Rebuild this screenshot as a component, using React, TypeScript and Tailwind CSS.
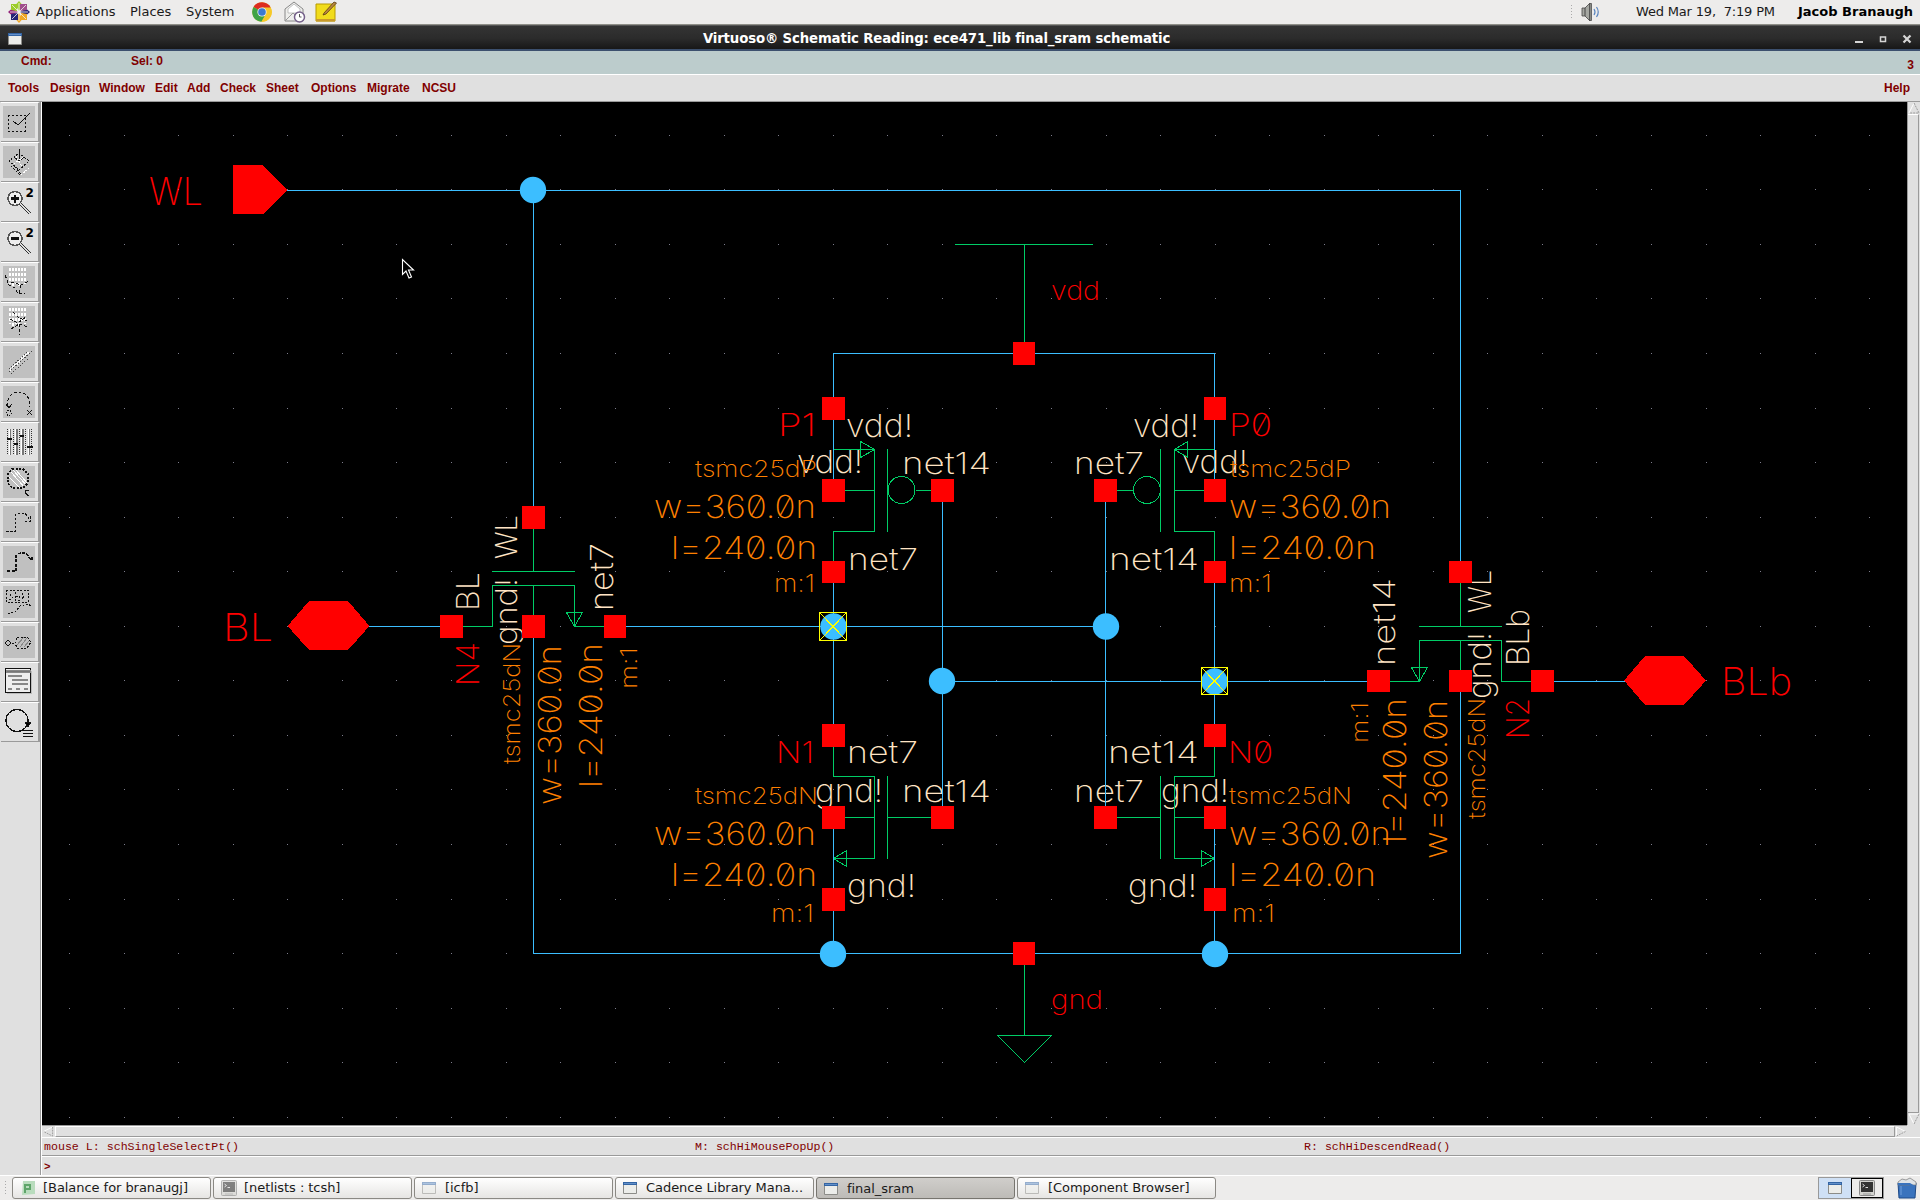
import React from "react";

/* ---------- schematic primitives ---------- */

type Label = [text: string, from: number, to: number, base: number, cap: number, color: string];

const TAN = "#ffe4c4";
const ORG = "#ff8000";
const RED = "#ff0000";
const BLUE = "#3cbeff";
const GREEN = "#00cc66";

const labels: Label[] = [
  ["WL", 151, 201, 205, 28, RED],
  ["BL", 225, 271, 641, 28, RED],
  ["BLb", 1723, 1790, 695, 28, RED],
  ["vdd", 1053, 1098, 300, 19, RED],
  ["gnd", 1053, 1101, 1009, 19, RED],
  ["P1", 780, 814, 436, 23, RED],
  ["vdd!", 848, 911, 437, 23, TAN],
  ["vdd!", 799, 861, 473, 23, TAN],
  ["net14", 904, 989, 474, 22, TAN],
  ["tsmc25dP", 697, 815, 477, 17, ORG],
  ["w=360.0n", 656, 814, 518, 23, ORG],
  ["l=240.0n", 673, 815, 559, 23, ORG],
  ["m:1", 776, 813, 592, 17.5, ORG],
  ["net7", 850, 916, 570, 22, TAN],
  ["vdd!", 1135, 1197, 437, 23, TAN],
  ["P0", 1231, 1270, 436, 23, RED],
  ["net7", 1076, 1142, 474, 22, TAN],
  ["vdd!", 1184, 1246, 473, 23, TAN],
  ["tsmc25dP", 1232, 1349, 477, 17, ORG],
  ["w=360.0n", 1231, 1389, 518, 23, ORG],
  ["l=240.0n", 1231, 1374, 559, 23, ORG],
  ["net14", 1111, 1197, 570, 22, TAN],
  ["m:1", 1231, 1270, 592, 17.5, ORG],
  ["N1", 778, 812, 763, 22, RED],
  ["net7", 849, 916, 763, 22, TAN],
  ["tsmc25dN", 697, 816, 804, 17, ORG],
  ["gnd!", 817, 881, 802, 23, TAN],
  ["net14", 904, 989, 802, 22, TAN],
  ["w=360.0n", 656, 814, 845, 23, ORG],
  ["l=240.0n", 673, 815, 886, 23, ORG],
  ["gnd!", 849, 914, 897, 23, TAN],
  ["m:1", 773, 812, 922, 17.5, ORG],
  ["net14", 1110, 1197, 763, 22, TAN],
  ["N0", 1230, 1271, 763, 22, RED],
  ["net7", 1076, 1142, 802, 22, TAN],
  ["gnd!", 1163, 1227, 802, 23, TAN],
  ["tsmc25dN", 1231, 1350, 804, 17, ORG],
  ["w=360.0n", 1231, 1389, 845, 23, ORG],
  ["l=240.0n", 1231, 1374, 886, 23, ORG],
  ["gnd!", 1130, 1195, 897, 23, TAN],
  ["m:1", 1234, 1273, 922, 17.5, ORG],
];

/* Labels that read upwards: from = lower end, to = upper end, base = x of the baseline. */
const upright: Label[] = [
  ["BL", 609, 574, 479, 23, TAN],
  ["WL", 557, 517, 517, 22, TAN],
  ["gnd!", 643, 580, 517, 22, TAN],
  ["net7", 609, 545, 613, 23, TAN],
  ["N4", 684, 644, 479, 23, RED],
  ["tsmc25dN", 762, 645, 520, 17, ORG],
  ["w=360.0n", 803, 647, 561, 23, ORG],
  ["l=240.0n", 786, 645, 602, 23, ORG],
  ["m:1", 687, 649, 637, 17, ORG],
  ["net14", 664, 580, 1395, 22, TAN],
  ["WL", 611, 572, 1491, 23, TAN],
  ["gnd!", 697, 634, 1491, 23, TAN],
  ["BLb", 664, 611, 1529, 23, TAN],
  ["m:1", 741, 704, 1368, 17, ORG],
  ["l=240.0n", 841, 700, 1406, 23, ORG],
  ["w=360.0n", 857, 702, 1447, 23, ORG],
  ["tsmc25dN", 817, 700, 1485, 17, ORG],
  ["N2", 737, 700, 1529, 23, RED],
];

const wires =
  "M287 190.5H1460.5V561M533.5 190V506M533.5 638V953.5H1460.5V692" +
  "M369 626.5H440M626 626.5H1105.5M833.5 397V353.5H1214.5V397M833.5 420V479M1214.5 420V479" +
  "M833.5 583V724M1214.5 583V724M942.5 502V806M1105.5 502V806M942.5 681.5H1367M1554 681.5H1625" +
  "M833.5 829V888M1214.5 829V888M833.5 911V953M1214.5 911V953";

const devices =
  "M955 244.5H1093M1024.5 244V342M1024.5 965V1035.5M997.5 1035.5H1051.5L1024.5 1062.5Z" +
  /* access transistor, left */
  "M533.5 529V571.5M492 571.5H575M463 626.5H492.5V585.5H574.5V626.5H604M533.5 585V615M566.5 612.5H582.5L574.5 626.5Z" +
  /* access transistor, right */
  "M1460.5 583V626.5M1419 626.5H1502M1390 681.5H1419.5V640.5H1501.5V681.5H1531M1460.5 640V670M1411.5 667.5H1427.5L1419.5 681.5Z" +
  /* left PMOS */
  "M833.5 449.5H874.5V531.5H833.5V561M845 490.5H874M887.5 449V532M916 490.5H931M860.5 441.5V457.5L874.5 449.5Z" +
  /* right PMOS */
  "M1214.5 449.5H1174.5V531.5H1214.5V561M1174 490.5H1204M1160.5 449V532M1117 490.5H1133M1187.5 441.5V457.5L1174.5 449.5Z" +
  /* left NMOS */
  "M833.5 747V776.5H874.5V858.5H833.5M845 817.5H874M887.5 776V859M887 817.5H931M846.5 850.5V866.5L833.5 858.5Z" +
  /* right NMOS */
  "M1214.5 747V776.5H1174.5V858.5H1214.5M1174 817.5H1204M1160.5 776V859M1117 817.5H1160M1201.5 850.5V866.5L1214.5 858.5Z";

const pins: [x: number, y: number, w: number, h: number][] = [
  [522, 506, 23, 23], [440, 615, 23, 23], [522, 615, 23, 23], [604, 615, 22, 23],
  [822, 397, 23, 23], [822, 479, 23, 23], [822, 561, 23, 22], [931, 479, 23, 23],
  [1204, 397, 22, 23], [1204, 479, 22, 23], [1204, 561, 22, 22], [1094, 479, 23, 23],
  [822, 724, 23, 23], [822, 806, 23, 23], [822, 888, 23, 23], [931, 806, 23, 23],
  [1204, 724, 22, 23], [1204, 806, 22, 23], [1204, 888, 22, 23], [1094, 806, 23, 23],
  [1013, 342, 22, 23], [1013, 942, 22, 23], [1449, 561, 23, 22],
  [1367, 670, 23, 22], [1449, 670, 23, 22], [1531, 670, 23, 22],
];

const joints: [number, number][] = [
  [533, 190], [833.5, 626.5], [1106, 626.5], [942, 681], [1214.5, 681.5], [833, 954], [1215, 954],
];

function SchText({ l, up }: { l: Label; up?: boolean }) {
  const [text, from, to, base, cap, color] = l;
  const len = Math.abs(to - from) + 4;
  const place = up
    ? `translate(${base} ${from + 2}) rotate(-90)`
    : `translate(${from - 2} ${base})`;
  return (
    <text
      transform={place}
      fontSize={cap / 0.727}
      fill={color}
      className={cap > 25 ? "font-[150]" : "font-extralight"}
      textLength={len}
      lengthAdjust="spacingAndGlyphs"
    >
      {text}
    </text>
  );
}

function Schematic() {
  const dots: React.ReactNode[] = [];
  for (let i = 0; i < 34; i++)
    for (let j = 0; j < 19; j++)
      dots.push(
        <rect key={i + "-" + j} x={Math.floor(69.6 + i * 54.55)} y={Math.floor(135.3 + j * 54.55)} width="1" height="1" />
      );
  return (
    <svg className="block h-[1023px] w-[1865px] bg-black" viewBox="42 102 1865 1023">
      <g fill="#7d7d8c" shapeRendering="crispEdges">{dots}</g>
      <g
        className="font-[Inter,sans-serif]"
        style={{ fontFeatureSettings: '"zero"' }}
      >
        {labels.map((l, i) => <SchText key={i} l={l} />)}
        {upright.map((l, i) => <SchText key={i} l={l} up />)}
      </g>
      <g fill="none" shapeRendering="crispEdges">
        <path d={devices} stroke={GREEN} />
        <circle cx="901.5" cy="490" r="13.5" stroke={GREEN} />
        <circle cx="1147" cy="490" r="13.5" stroke={GREEN} />
        <path d={wires} stroke={BLUE} />
      </g>
      <g fill={BLUE}>
        {joints.map(([x, y], i) => <circle key={i} cx={x} cy={y} r="13.2" />)}
      </g>
      <g fill={RED} shapeRendering="crispEdges">
        {pins.map(([x, y, w, h], i) => <rect key={i} x={x} y={y} width={w} height={h} />)}
        <path d="M233 165H263L287 190L263 214H233ZM287.500 626L309 601H348L369.500 626L348 650H309ZM1624 680.500L1645 656H1684L1706 680.500L1684 705H1645Z" />
      </g>
      <g fill="none" stroke="#ffff00" shapeRendering="crispEdges">
        <path d="M819.500 612.500h27v28h-27zl27 28m0-28l-27 28M1201.500 667.500h26v27h-26zl26 27m0-27l-26 27" />
      </g>
      <path
        d="M402.500 259.500v15l3.500-3.500 3 7 2.500-1-3-7h5z"
        fill="#000"
        stroke="#fff"
        strokeWidth="1.100"
      />
    </svg>
  );
}

/* ---------- toolbar ---------- */

function Magnifier({ sign }: { sign: string }) {
  return (
    <g transform="translate(0 -1.500)">
      <circle cx="12" cy="14" r="7" fill="#eee" stroke="#555" strokeWidth="1.500" />
      <path d={sign} strokeWidth="2.400" />
      <path d="M17 19l10 10" stroke="#333" strokeWidth="3" />
      <path d="M17 19l10 10" stroke="#ddd" />
      <text x="22.500" y="12.500" className="font-[DejaVu_Sans,sans-serif] text-[12px] font-bold" fill="#000" stroke="none">2</text>
    </g>
  );
}

const toolIcons: { live?: boolean; art: React.ReactNode }[] = [
  { art: <><path d="M5 9h17v16H5z" strokeDasharray="2 2" /><path d="M10 15l5 4 12-12" /></> },
  { art: <><path d="M16 3v12l-5-4m5 4l5-4" /><path d="M16 7l10 8-10 9-10-9zM8 20l9 9M12 21l6 7" strokeDasharray="2 1.500" /><path d="M18 29l8-7M13 10l6 11M11 18l9-7" stroke="#fff" strokeDasharray="2 1" /></> },
  { live: true, art: <Magnifier sign="M8 14h8M12 10v8" /> },
  { live: true, art: <Magnifier sign="M8 14h8" /> },
  { art: <><path d="M7 2v16M10 2v18M13 2v16M16 2v18M19 2v14M22 2v16" stroke="#fff" strokeDasharray="3 2" strokeWidth="1.500" /><path d="M2 9l4 10 6 3 3 6 7-1M8 16l10 3 8-4M18 19l-2 8" strokeDasharray="3 2" /></> },
  { art: <><path d="M7 2v16M10 2v18M13 2v16M16 2v18M19 2v14M22 2v16" stroke="#fff" strokeDasharray="3 2" strokeWidth="1.500" /><path d="M10 6l6 6 8 3M7 13l8 4 8-6M8 23l8-5 9 3M16 18l1 11" strokeDasharray="3 2" /></> },
  { art: <><path d="M7 24L26 6" stroke="#fff" strokeDasharray="2 1" strokeWidth="2.500" /><path d="M6 26L29 5M6 23L24 6M8 28L26 12" stroke="#444" strokeDasharray="1 2" /></> },
  { art: <><path d="M5 20C3 12 9 6 16 6s12 7 10 15" strokeDasharray="3 2" /><path d="M3 18l3 4 3-4M24 24l5 5m0-5l-5 5" /><circle cx="6" cy="27" r="2.500" strokeDasharray="1 1.500" /></> },
  { live: true, art: <><path d="M4 3v26M10 3v26M16 3v26M22 3v26M28 3v26" stroke="#333" strokeDasharray="1 1" /><path d="M7 3v26M14 3v26M20 3v26M26 3v26" stroke="#777" strokeWidth="2" /><path d="M6 3v26M12 3v26M18 3v26M25 3v26" stroke="#fff" /><path d="M4 13h5M11 18h4M17 10h4M24 21h6" strokeWidth="2" /></> },
  { art: <><path d="M8 6l14 16M13 4l11 13M6 11l12 12M10 4l14 16" stroke="#fff" /><path d="M9 3h11l5 5v9l-5 5H9l-4-5V8z" strokeDasharray="2 1.500" strokeWidth="1.500" /><path d="M26 24l-4 1v2l4 3" /></> },
  { art: <path d="M3 25h9V9l4-2h6l5 7m0-4v5h-5" strokeDasharray="2.500 1.500" /> },
  { art: <><path d="M4 25h9V9l4-2h6l5 7m1-3v5" strokeDasharray="3 1.500" strokeWidth="1.300" /></> },
  { art: <><path d="M3 4h22v12H3zM7 8l3 4-4 2M12 6v8h4v-4h-4M19 7v6l3-4" strokeDasharray="2 1.500" /><path d="M5 28l8-3 4-5 8-2 4 3" strokeDasharray="2 1.500" /></> },
  { art: <><path d="M5 14l3 3-3 3-3-3z" /><path d="M9 17h3M14 11h10l4 5-4 6H14l-2-5z" strokeDasharray="2 1.500" /><path d="M14 19l7-8M17 21l7-9M21 21l5-6" stroke="#888" /></> },
  { live: true, art: <g transform="translate(0 -2)"><path d="M4 7h25v23H4z" fill="#bbb" stroke="none" /><path d="M2.500 4.500h25v24h-25z" fill="#eee" strokeWidth="1.500" /><path d="M3 6h24v2H3z" fill="#777" stroke="#888" /><path d="M5 12h14M9 16h16M9 20h16M5 25h4M13 25h4M21 25h4" stroke="#888" strokeWidth="2" /></g> },
  { live: true, art: <><circle cx="14" cy="14.500" r="11" strokeWidth="1.300" /><path d="M22 16h6l-3 5z" fill="#000" /><path d="M20 24.500h10M20 27.500h10M20 30.500h10" stroke="#111" strokeWidth="1.500" /></> },
];

function ToolButton({ live, art }: { live?: boolean; art: React.ReactNode }) {
  return (
    <div className="h-10 w-[39px] border-r-2 border-b border-t border-r-[#9a9a9a] border-b-[#9a9a9a] border-t-white pt-[3px] pl-[2px]">
      <svg
        viewBox="0 0 32 32"
        className={live ? "block h-8 w-8" : "block h-8 w-8 bg-[#c0c0c0]"}
        fill="none"
        stroke="#111"
        shapeRendering="crispEdges"
      >
        {art}
      </svg>
    </div>
  );
}

/* ---------- small icons ---------- */

function WindowIcon({ className }: { className?: string }) {
  return (
    <svg viewBox="0 0 14 12" className={"h-3 w-3.5 shrink-0 " + (className ?? "")}>
      <path d="M.5.5h13v11H.5z" fill="#ecedea" stroke="#8c8c88" />
      <path d="M0 0h14v3H0z" fill="#3465a4" />
      <path d="M1 1h12v.8H1z" fill="#6f9bd3" />
    </svg>
  );
}

function TermIcon({ className }: { className?: string }) {
  return (
    <svg viewBox="0 0 16 16" className={"h-4 w-4 shrink-0 " + (className ?? "")}>
      <rect x=".5" y=".5" width="15" height="15" rx="1" fill="#d3d3cf" stroke="#888" />
      <path d="M2 2h12v10H2z" fill="#333" />
      <path d="M3.500 4l2 1.500-2 1.500M6.500 7.500h2.500" stroke="#ddd" fill="none" />
      <path d="M4 14h8" stroke="#999" />
    </svg>
  );
}

function CentosIcon() {
  return (
    <svg viewBox="0 0 22 22" className="h-[22px] w-[22px]">
      <path d="M11 0l3.500 4L11 10 7.500 4z" fill="#9ccd2a" />
      <path d="M22 11l-4 3.500L12 11l6-3.500z" fill="#262577" />
      <path d="M11 22l-3.500-4L11 12l3.500 6z" fill="#efa724" />
      <path d="M0 11l4-3.500L10 11l-6 3.500z" fill="#932279" />
      <path d="M3 3h6v7L3 9z" fill="#9ccd2a" />
      <path d="M19 3v6l-7 1V3z" fill="#a14f8c" />
      <path d="M19 19h-6v-7l6 1z" fill="#efa724" />
      <path d="M3 19v-6l7-1v7z" fill="#262577" />
      <path d="M4 4l14 14M18 4L4 18M11 2v18M2 11h18" stroke="#f3f1ef" strokeWidth=".8" />
    </svg>
  );
}

function ChromeIcon() {
  return (
    <svg viewBox="0 0 20 20" className="h-5 w-5">
      <circle cx="10" cy="10" r="9.800" fill="#f6c928" />
      <path d="M10 10L1.500 5A9.800 9.800 0 0 1 18.700 5.500z" fill="#dd2c20" />
      <path d="M1.500 5A9.800 9.800 0 0 0 9.500 19.800L14 12 10 10z" fill="#3fa345" />
      <path d="M10 5.500h8.700A9.800 9.800 0 0 1 9.500 19.800L14 12z" fill="#f6c928" />
      <circle cx="10" cy="10" r="4.600" fill="#f4f4f4" />
      <circle cx="10" cy="10" r="3.800" fill="#3c7ad0" />
    </svg>
  );
}

function MailIcon() {
  return (
    <svg viewBox="0 0 22 22" className="h-[22px] w-[22px]">
      <path d="M1 8l9-7 9 7v12H1z" fill="#eeeeec" stroke="#888" />
      <path d="M4 8l6-5 6 5v4H4z" fill="#fff" stroke="#aaa" strokeWidth=".7" />
      <path d="M1 20l8-8 9 8" fill="none" stroke="#999" />
      <circle cx="15.500" cy="16" r="5" fill="#fff" stroke="#75608a" strokeWidth="1.500" />
      <path d="M15.500 13v3h2" fill="none" stroke="#555" />
    </svg>
  );
}

function NoteIcon() {
  return (
    <svg viewBox="0 0 22 22" className="h-[22px] w-[22px]">
      <path d="M1 3h19v17H1z" fill="#f1dc1c" stroke="#b79a00" />
      <path d="M1 18h19v2.500H1z" fill="#c99a2a" />
      <path d="M9 12L19 1l2.500 1L11 13l-3 1z" fill="#b98742" stroke="#5c3c12" strokeWidth=".8" />
    </svg>
  );
}

function SpeakerIcon() {
  return (
    <svg viewBox="0 0 20 20" className="h-5 w-5">
      <path d="M1 6h3l5-5v18l-5-5H1z" fill="#a5a7a2" stroke="#444" strokeWidth=".8" />
      <path d="M8.500 1.500h2v17h-2z" fill="#888a85" stroke="#444" strokeWidth=".7" />
      <path d="M4 6v8" stroke="#444" />
      <path d="M13 7q2 3 0 6M15.500 5q3.500 5 0 10" fill="none" stroke="#5a86c0" strokeWidth="1.200" />
    </svg>
  );
}

function TrashIcon() {
  return (
    <svg viewBox="0 0 20 22" className="h-[22px] w-5">
      <path d="M1 6h18l-1 15H2z" fill="#3a73bd" stroke="#1f4a87" />
      <path d="M1 5l4-3 4 1 4-2 6 4v3H1z" fill="#dfe3e6" stroke="#777" strokeWidth=".7" />
      <path d="M1 6h12l5 3v3l-6-4H1z" fill="#3a73bd" />
      <path d="M4 9v9" stroke="#6f9fdc" />
    </svg>
  );
}

function Grip() {
  return (
    <div className="h-4 w-1 bg-[radial-gradient(circle,#aaa_0.7px,transparent_0.8px)] bg-[length:3px_3px]" />
  );
}

/* ---------- window chrome ---------- */

const menus: [string, string][] = [
  ["Tools", "w-[42px]"],
  ["Design", "w-[49px]"],
  ["Window", "w-[56px]"],
  ["Edit", "w-[32px]"],
  ["Add", "w-[33px]"],
  ["Check", "w-[46px]"],
  ["Sheet", "w-[45px]"],
  ["Options", "w-[56px]"],
  ["Migrate", "w-[55px]"],
  ["NCSU", "w-[40px]"],
];

function GnomePanel() {
  return (
    <div className="flex h-[25px] items-center border-b border-[#8f8f88] bg-[#edeceb] pl-2 text-[13px] text-[#1a1a1a]">
      <CentosIcon />
      <span className="ml-[6px] w-[94px]">Applications</span>
      <span className="w-14">Places</span>
      <span className="w-[66px]">System</span>
      <ChromeIcon />
      <span className="ml-3"><MailIcon /></span>
      <span className="ml-[9px]"><NoteIcon /></span>
      <span className="ml-auto"><Grip /></span>
      <span className="ml-[7px]"><SpeakerIcon /></span>
      <span className="ml-[35px] w-[162px] tracking-[-0.18px] whitespace-pre">Wed Mar 19,  7:19 PM</span>
      <span className="w-[122px] font-bold text-black">Jacob Branaugh</span>
    </div>
  );
}

function TitleBar() {
  return (
    <div className="flex h-[26px] items-center border-t border-[#555] bg-linear-to-b from-[#343434] via-[#2b2b2b] to-[#141414] pr-2 pl-2 shadow-[inset_0_-2px_0_#3c506e]">
      <WindowIcon />
      <div className="grow pr-[3px] text-center text-[13.3px] font-bold tracking-[-0.145px] text-white">
        Virtuoso® Schematic Reading: ece471_lib final_sram schematic
      </div>
      <svg viewBox="0 0 58 12" className="h-3 w-[58px] shrink-0" fill="none" stroke="#d5d5d5">
        <path d="M1 9h8" strokeWidth="2" />
        <path d="M26.500 4h5v4.500h-5z" strokeWidth="1.500" />
        <path d="M49.500 2.500l7 7m0-7l-7 7" strokeWidth="2.200" />
      </svg>
    </div>
  );
}

function Window() {
  return (
    <div className="flex grow flex-col bg-[#e0e0e0] font-['Liberation_Sans',Arial,sans-serif] text-[12px] font-bold text-[#800000]">
      <div className="flex h-[23px] items-start bg-[#bccccc] pt-[1px] pl-[21px]">
        <span className="w-[110px]">Cmd:</span>
        <span>Sel: 0</span>
        <span className="ml-auto pt-1 pr-[6px]">3</span>
      </div>
      <div className="flex h-7 items-center border-t border-b border-t-white border-b-[#9a9a9a] pl-2">
        {menus.map(([name, w]) => (
          <span key={name} className={w}>{name}</span>
        ))}
        <span className="ml-auto pr-[10px]">Help</span>
      </div>
      <div className="flex h-[1073px]">
        <div className="w-[42px] shrink-0 border-r border-white pl-px shadow-[inset_-1px_0_0_#9a9a9a]">
          {toolIcons.map((t, i) => (
            <ToolButton key={i} {...t} />
          ))}
        </div>
        <div className="flex grow flex-col">
          <div className="flex">
            <Schematic />
            <div className="flex w-[13px] flex-col border-l border-[#9a9a9a]">
              <svg viewBox="0 0 12 12" className="h-3 w-3" fill="none" stroke="#9a9a9a">
                <path d="M6 1L1 11" stroke="#fff" />
                <path d="M6 1l5 10H1" strokeDasharray="2 1" />
              </svg>
              <div className="w-[11px] grow border-t border-r border-b border-t-white border-r-[#9a9a9a] border-b-[#9a9a9a]" />
              <svg viewBox="0 0 12 12" className="h-3 w-3" fill="none" stroke="#9a9a9a">
                <path d="M6 11L1 1h10" stroke="#fff" />
                <path d="M6 11l5-10" strokeDasharray="2 1" />
              </svg>
            </div>
          </div>
          <div className="mr-[13px] flex h-3 border-t border-[#9a9a9a]">
            <svg viewBox="0 0 12 12" className="h-[11px] w-3" fill="none" stroke="#9a9a9a">
              <path d="M1 6l10-5" stroke="#fff" />
              <path d="M11 1v10L1 6" strokeDasharray="2 1" />
            </svg>
            <div className="ml-px grow border border-t-white border-r-[#9a9a9a] border-b-[#9a9a9a] border-l-white" />
            <svg viewBox="0 0 12 12" className="h-[11px] w-3" fill="none" stroke="#9a9a9a">
              <path d="M11 6L1 1v10" stroke="#fff" />
              <path d="M11 6L1 11" strokeDasharray="2 1" />
            </svg>
          </div>
          <div className="flex h-[19px] items-center border-t border-b border-t-white border-b-[#9a9a9a] pt-px pl-[2px] font-['Liberation_Mono',monospace] text-[11.62px] font-normal">
            <span className="w-[651px]">mouse L: schSingleSelectPt()</span>
            <span className="w-[609px]">M: schHiMousePopUp()</span>
            <span>R: schHiDescendRead()</span>
          </div>
          <div className="flex h-[19px] items-center border-t border-white pt-[2px] pl-[2px] font-['Liberation_Mono',monospace] text-[11px]">
            &gt;
          </div>
        </div>
      </div>
    </div>
  );
}

const tasks: { name: string; icon: React.ReactNode; active?: boolean }[] = [
  {
    name: "[Balance for branaugj]",
    icon: (
      <svg viewBox="0 0 16 16" className="h-4 w-4 shrink-0">
        <path d="M3 1h12v13l-13 1z" fill="#b9dcbd" />
        <path d="M5 13V5h5v4H5" fill="none" stroke="#5fa56a" strokeWidth="2" />
      </svg>
    ),
  },
  { name: "[netlists : tcsh]", icon: <TermIcon className="opacity-60" /> },
  { name: "[icfb]", icon: <WindowIcon className="opacity-50" /> },
  { name: "Cadence Library Mana...", icon: <WindowIcon /> },
  { name: "final_sram", icon: <WindowIcon />, active: true },
  { name: "[Component Browser]", icon: <WindowIcon className="opacity-50" /> },
];

function Taskbar() {
  return (
    <div className="flex h-[25px] items-center border-t border-white bg-[#edeceb] pr-[3px] pl-1 text-[13px] text-[#1a1a1a]">
      <Grip />
      <div className="ml-1 flex gap-[2px]">
        {tasks.map((t) => (
          <div
            key={t.name}
            className={
              t.active
                ? "flex h-[22px] w-[199px] items-center gap-[7px] rounded-[3px] border border-[#77756f] bg-linear-to-b from-[#d0cecb] to-[#bdbbb7] pt-[2px] pl-[7px]"
                : "flex h-[22px] w-[199px] items-center gap-[7px] rounded-[3px] border border-[#8b8984] bg-linear-to-b from-white to-[#e6e5e3] pl-[7px]"
            }
          >
            <span className="flex w-4 shrink-0">{t.icon}</span>
            <span className="pb-[2px] leading-none tracking-[-0.05px] whitespace-nowrap">{t.name}</span>
          </div>
        ))}
      </div>
      <div className="mr-[13px] ml-auto flex h-[22px] w-[66px] border border-[#999]">
        <div className="flex w-8 items-center justify-center bg-[#cfe0f5]"><WindowIcon /></div>
        <div className="flex grow items-center justify-center border border-black"><TermIcon /></div>
      </div>
      <TrashIcon />
    </div>
  );
}

export default function App() {
  return (
    <div className="flex h-[1200px] w-[1920px] flex-col overflow-hidden font-['DejaVu_Sans',sans-serif]">
      <GnomePanel />
      <TitleBar />
      <Window />
      <Taskbar />
    </div>
  );
}
